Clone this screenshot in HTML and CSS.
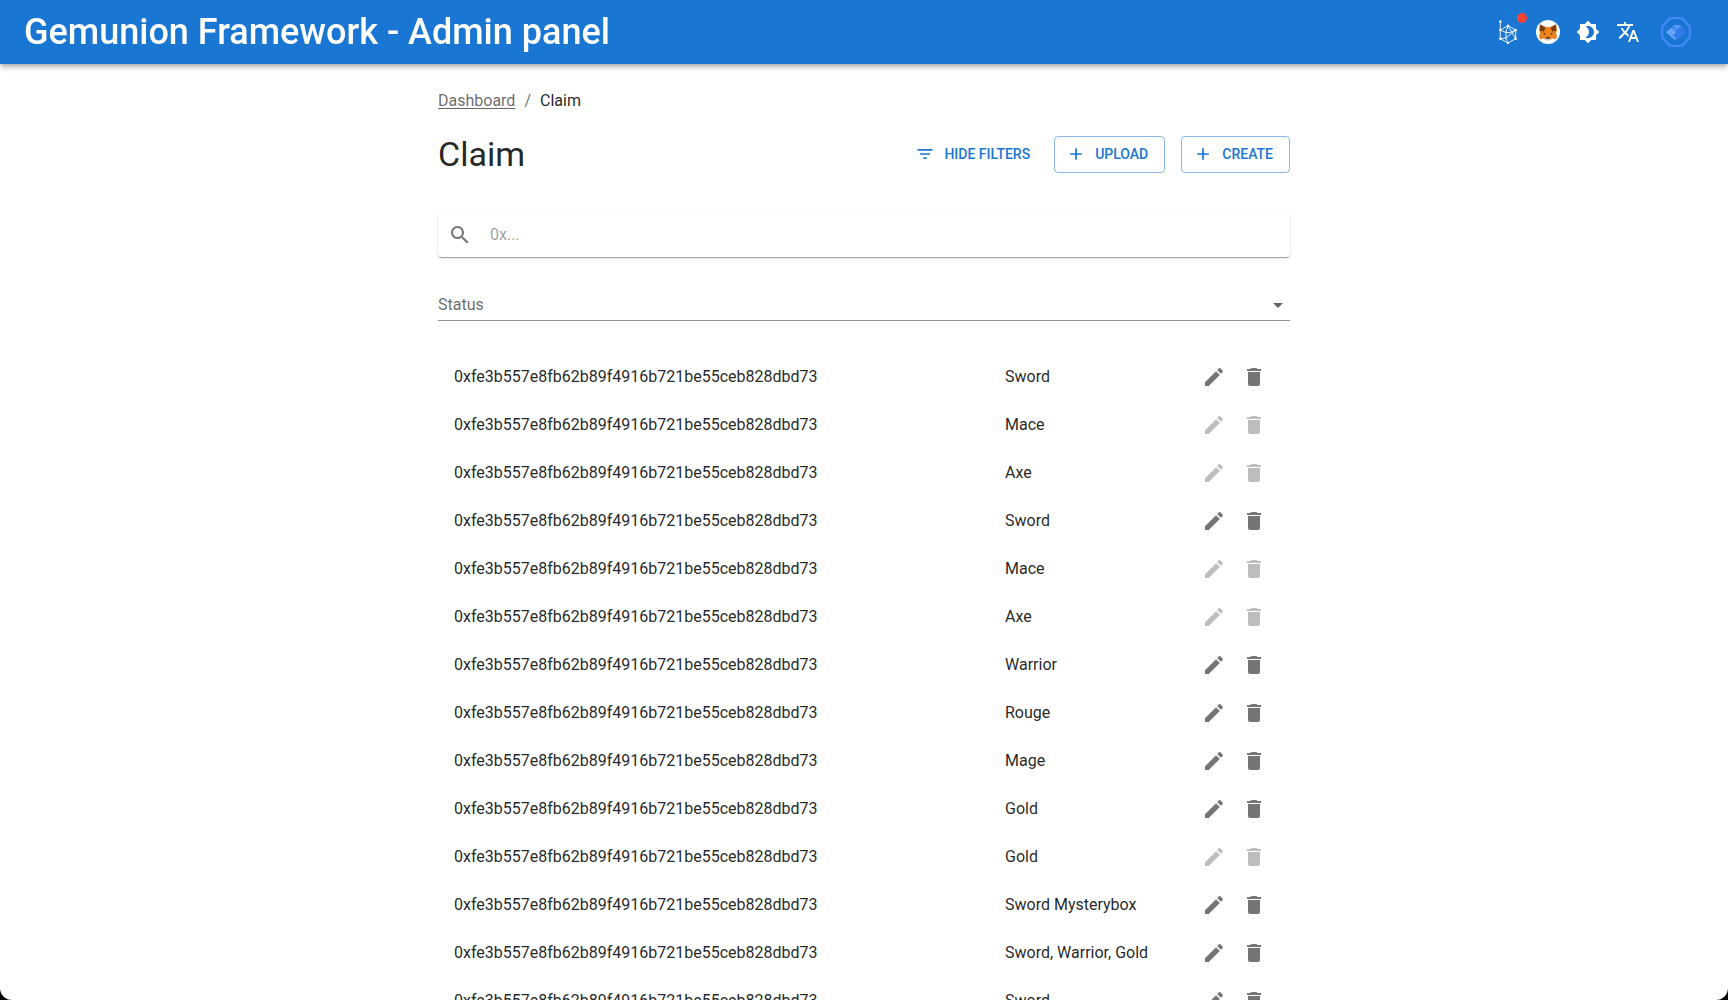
FILE: index.html
```html
<!DOCTYPE html>
<html lang="en">
<head>
<meta charset="utf-8">
<meta name="viewport" content="width=device-width, initial-scale=1">
<title>Claim - Gemunion Framework</title>
<link rel="stylesheet" href="styles.css">
</head>
<body>
<svg class="sprite" aria-hidden="true">
  <symbol id="edit" viewBox="0 0 24 24"><path d="M3 17.25V21h3.75L17.81 9.94l-3.75-3.75L3 17.25zM20.71 7.04c.39-.39.39-1.02 0-1.41l-2.34-2.34a.9959.9959 0 0 0-1.41 0l-1.83 1.83 3.75 3.75 1.83-1.83z"/></symbol>
  <symbol id="delete" viewBox="0 0 24 24"><path d="M6 19c0 1.1.9 2 2 2h8c1.1 0 2-.9 2-2V7H6v12zM19 4h-3.500l-1-1h-5l-1 1H5v2h14V4z"/></symbol>
  <symbol id="add" viewBox="0 0 24 24"><path d="M19 13h-6v6h-2v-6H5v-2h6V5h2v6h6v2z"/></symbol>
</svg>
<div class="window">
  <header class="app-bar">
    <a class="brand" href="#">Gemunion Framework - Admin panel</a>
    <nav class="toolbar" aria-label="Account">
      <button class="icon-button" type="button" aria-label="Network">
        <svg class="icon" viewBox="0 0 24 24" aria-hidden="true">
          <g fill="none" stroke="#fff" stroke-width=".9"><path d="M4.300 1.500v17.200L12 23l7.700-4.300V10L12 5.700 4.300 10l5.700 2.500M12 5.700L10 12.500v5.500M10 12.500h4l5.700-2.500M10 18l-5.700.7M10 18l9.700-8M12 5.700l7.700 13M10 18l2 5"/></g>
          <g fill="#fff"><circle cx="4.300" cy="1.500" r="1.200"/><circle cx="4.300" cy="10" r="1.200"/><circle cx="12" cy="5.700" r="1.200"/><circle cx="19.700" cy="10" r="1.200"/><circle cx="19.700" cy="18.700" r="1.200"/><circle cx="12" cy="23" r="1.200"/><circle cx="4.300" cy="18.700" r="1.200"/></g>
        </svg>
        <span class="badge"></span>
      </button>
      <button class="icon-button" type="button" aria-label="Wallet">
        <svg class="icon" viewBox="0 0 24 24" aria-hidden="true">
          <circle cx="12" cy="12" r="12" fill="#fff"/>
          <path fill="#e8821e" d="M4 4.500l6 2.500h4l6-2.500 1 5-1 3.500 1 3-1 3.300-3.800-.8-2.200 1.500h-4L7.800 18.500 4 19.300 3 16l1-3-1-3.500z"/>
          <path fill="#763d16" d="M3.800 4.200L10 8.300l-2 3.200-4.500-.7.600-2zM20.200 4.200L14 8.300l2 3.200 4.500-.7-.6-2z"/>
          <path fill="#f6851b" d="M10 7h4l2.500 5.500L14 16h-4l-2.500-3.500z"/>
          <path fill="#3b2a20" d="M7.700 12.600l2.400 1.600-2.200.2zM16.300 12.600l-2.400 1.600 2.200.2zM10.600 17h2.800l.4 1.700h-3.600z"/>
          <path fill="#d7c1b3" d="M8 18.500l2.200.2h3.600l2.200-.2-2 2h-4z"/>
        </svg>
      </button>
      <button class="icon-button" type="button" aria-label="Theme">
        <svg class="icon" viewBox="0 0 24 24" aria-hidden="true"><path d="M20 8.690V4h-4.690L12 .69 8.690 4H4v4.690L.69 12 4 15.310V20h4.690L12 23.310 15.310 20H20v-4.690L23.310 12 20 8.690zM12 18c-.89 0-1.740-.2-2.500-.55C11.560 16.500 13 14.420 13 12s-1.440-4.500-3.500-5.450C10.260 6.200 11.110 6 12 6c3.310 0 6 2.690 6 6s-2.690 6-6 6z"/></svg>
      </button>
      <button class="icon-button" type="button" aria-label="Language">
        <svg class="icon" viewBox="0 0 24 24" aria-hidden="true"><path d="m12.870 15.070-2.540-2.510.03-.03c1.740-1.940 2.980-4.170 3.710-6.530H17V4h-7V2H8v2H1v1.990h11.170C11.500 7.920 10.440 9.750 9 11.350 8.070 10.320 7.300 9.190 6.690 8h-2c.73 1.630 1.730 3.170 2.980 4.560l-5.090 5.020L4 19l5-5 3.110 3.110.76-2.040zM18.500 10h-2L12 22h2l1.120-3h4.750L21 22h2l-4.500-12zm-2.620 7 1.620-4.330L19.120 17h-3.240z"/></svg>
      </button>
      <button class="icon-button avatar-button" type="button" aria-label="Profile">
        <svg class="avatar" viewBox="0 0 30 30" aria-hidden="true">
          <path d="M9.400 1.200h11.200l8.200 8.200v11.200l-8.200 8.200H9.400l-8.200-8.200V9.400z" fill="none" stroke="#4289f7" stroke-width="2.300"/>
          <path d="M5 15l6-4.500 8.500 8-6 4.500z" fill="#6ba6fc"/>
          <path d="M11 10l2-2h6l2 2-5 5.500z" fill="#4289f7"/>
          <path d="M13 8h2.500v4.500zM16.500 8H19l-2.500 4.500z" fill="#6ba6fc"/>
          <path d="M15 14l6-4.500 4 6-8.500 7-4-3z" fill="#3279ea"/>
          <path d="M11.500 12.500l7.500 6.500M8.500 15l7 6" stroke="#4387f2" stroke-width=".8"/>
        </svg>
      </button>
    </nav>
  </header>

  <main class="container">
    <nav class="breadcrumbs" aria-label="Breadcrumb">
      <a href="#">Dashboard</a><span>/</span><span class="current">Claim</span>
    </nav>

    <div class="page-header">
      <h1>Claim</h1>
      <div class="page-actions">
        <button class="button" type="button"><svg class="icon-small" viewBox="0 0 24 24" aria-hidden="true"><path d="M10 18h4v-2h-4v2zM3 6v2h18V6H3zm3 7h12v-2H6v2z"/></svg>Hide filters</button>
        <button class="button outlined" type="button"><svg class="icon-small" aria-hidden="true"><use href="#add"/></svg>Upload</button>
        <button class="button outlined" type="button"><svg class="icon-small" aria-hidden="true"><use href="#add"/></svg>Create</button>
      </div>
    </div>

    <form class="filters">
      <div class="search">
        <button class="search-button" type="submit" aria-label="Search"><svg class="icon" viewBox="0 0 24 24" aria-hidden="true"><path d="M15.500 14h-.79l-.28-.27C15.410 12.590 16 11.110 16 9.500 16 5.910 13.090 3 9.500 3S3 5.910 3 9.500 5.910 16 9.500 16c1.610 0 3.090-.59 4.230-1.570l.27.28v.79l5 4.990L20.490 19l-4.990-5zm-6 0C7.010 14 5 11.990 5 9.500S7.010 5 9.500 5 14 7.010 14 9.500 11.990 14 9.500 14z"/></svg></button>
        <input type="text" placeholder="0x..." aria-label="Account address">
      </div>
      <div class="select-field">
        <label for="status">Status</label>
        <select id="status"><option value=""></option><option value="new">New</option><option value="redeemed">Redeemed</option></select>
        <svg class="icon" viewBox="0 0 24 24" aria-hidden="true"><path d="m7 10 5 5 5-5z"/></svg>
      </div>
    </form>

    <table class="claims" aria-label="Claims">
      <colgroup><col><col class="col-item"><col class="col-actions"></colgroup>
      <tbody id="claims"></tbody>
    </table>
  </main>
</div>
<script src="claims.js"></script>
</body>
</html>
```
FILE: claims.js
```js
const account = "0xfe3b557e8fb62b89f4916b721be55ceb828dbd73";
const claims = [
  ["Sword", true],
  ["Mace", false],
  ["Axe", false],
  ["Sword", true],
  ["Mace", false],
  ["Axe", false],
  ["Warrior", true],
  ["Rouge", true],
  ["Mage", true],
  ["Gold", true],
  ["Gold", false],
  ["Sword Mysterybox", true],
  ["Sword, Warrior, Gold", true],
  ["Sword", true],
];

const action = (icon, label, enabled) =>
  `<button class="icon-button" type="button" aria-label="${label}"${enabled ? "" : " disabled"}>` +
  `<svg class="icon" aria-hidden="true"><use href="#${icon}"/></svg></button>`;

document.getElementById("claims").innerHTML = claims
  .map(([item, enabled]) =>
    `<tr><td>${account}</td><td>${item}</td><td><div class="row-actions">` +
    action("edit", "Edit", enabled) + action("delete", "Delete", enabled) +
    `</div></td></tr>`)
  .join("");
```
FILE: styles.css
```css
* {
  box-sizing: border-box;
}

html {
  height: 100%;
  background: #000;
}

body {
  height: 100%;
  margin: 0;
  font: 400 16px/24px Roboto, sans-serif;
  color: rgba(0, 0, 0, 0.87);
}

button,
input,
select {
  margin: 0;
  padding: 0;
  border: 0;
  background: none;
  font: inherit;
  color: inherit;
}

button {
  cursor: pointer;
}

.sprite {
  display: none;
}

.window {
  display: flex;
  flex-direction: column;
  height: 100%;
  overflow-y: auto;
  scrollbar-width: none;
  background: #fff;
  border-radius: 0 0 12px 12px;
}

.app-bar {
  position: sticky;
  top: 0;
  z-index: 1;
  display: flex;
  flex: none;
  align-items: center;
  justify-content: space-between;
  height: 64px;
  padding: 0 32px 0 24px;
  background: #1976d2;
  color: #fff;
  box-shadow: 0 2px 4px -1px rgba(0, 0, 0, 0.2), 0 4px 5px 0 rgba(0, 0, 0, 0.14), 0 1px 10px 0 rgba(0, 0, 0, 0.12);
}

.brand {
  font-size: 36px;
  font-weight: 500;
  line-height: 44px;
  color: inherit;
  text-decoration: none;
}

.toolbar {
  display: flex;
  align-items: center;
}

.icon {
  display: block;
  width: 24px;
  height: 24px;
  fill: currentColor;
}

.icon-button {
  position: relative;
  width: 40px;
  height: 40px;
  padding: 8px;
}

.avatar-button {
  margin-left: 8px;
  padding: 5px;
}

.avatar {
  display: block;
  width: 30px;
  height: 30px;
}

.badge {
  position: absolute;
  top: 1px;
  right: 1px;
  width: 10px;
  height: 10px;
  border-radius: 50%;
  background: #f44336;
}

.container {
  width: 100%;
  max-width: 900px;
  margin: 0 auto;
  padding: 25px 24px 0;
}

.breadcrumbs {
  display: flex;
  gap: 9px;
  color: rgba(0, 0, 0, 0.6);
}

.breadcrumbs a {
  color: inherit;
  text-underline-offset: 2px;
}

.breadcrumbs .current {
  color: rgba(0, 0, 0, 0.87);
}

.page-header {
  display: flex;
  align-items: center;
  justify-content: space-between;
  margin: 19px 0 37px;
}

h1 {
  margin: 0;
  font-size: 34px;
  font-weight: 400;
  line-height: 44px;
}

.page-actions {
  display: flex;
  gap: 16px;
}

.button {
  display: flex;
  align-items: center;
  gap: 9px;
  height: 37px;
  padding: 0 8px 0 4px;
  border-radius: 4px;
  font-size: 14px;
  font-weight: 500;
  text-transform: uppercase;
  color: #1976d2;
}

.outlined {
  padding: 0 16px 0 11px;
  border: 1px solid rgba(25, 118, 210, 0.5);
}

.icon-small {
  width: 20px;
  height: 20px;
  fill: currentColor;
}

.search {
  display: flex;
  align-items: center;
  height: 44px;
  border-radius: 4px;
  box-shadow: 0 2px 1px -1px rgba(0, 0, 0, 0.2), 0 1px 1px 0 rgba(0, 0, 0, 0.14), 0 1px 3px 0 rgba(0, 0, 0, 0.12);
}

.search-button {
  padding: 10px;
  color: rgba(0, 0, 0, 0.54);
}

.search input {
  flex: 1;
  min-width: 0;
  padding: 0 8px;
  outline: 0;
}

.search input::placeholder {
  color: rgba(0, 0, 0, 0.4);
  opacity: 1;
}

.select-field {
  display: grid;
  grid-template-columns: 1fr 24px;
  align-items: center;
  height: 32px;
  margin: 32px 0;
  border-bottom: 1px solid rgba(0, 0, 0, 0.42);
  color: rgba(0, 0, 0, 0.6);
}

.select-field label {
  grid-area: 1 / 1;
}

.select-field select {
  grid-area: 1 / 1 / 2 / 3;
  height: 100%;
  appearance: none;
}

.select-field .icon {
  grid-area: 1 / 2;
  pointer-events: none;
}

.claims {
  width: 100%;
  table-layout: fixed;
  border-collapse: collapse;
}

.col-item {
  width: 189px;
}

.col-actions {
  width: 96px;
}

.claims td {
  height: 48px;
  padding: 0;
}

.claims td:first-child {
  padding-left: 16px;
}

.row-actions {
  display: flex;
  color: rgba(0, 0, 0, 0.54);
}

.row-actions .icon-button:disabled {
  color: rgba(0, 0, 0, 0.26);
  cursor: default;
}
```
